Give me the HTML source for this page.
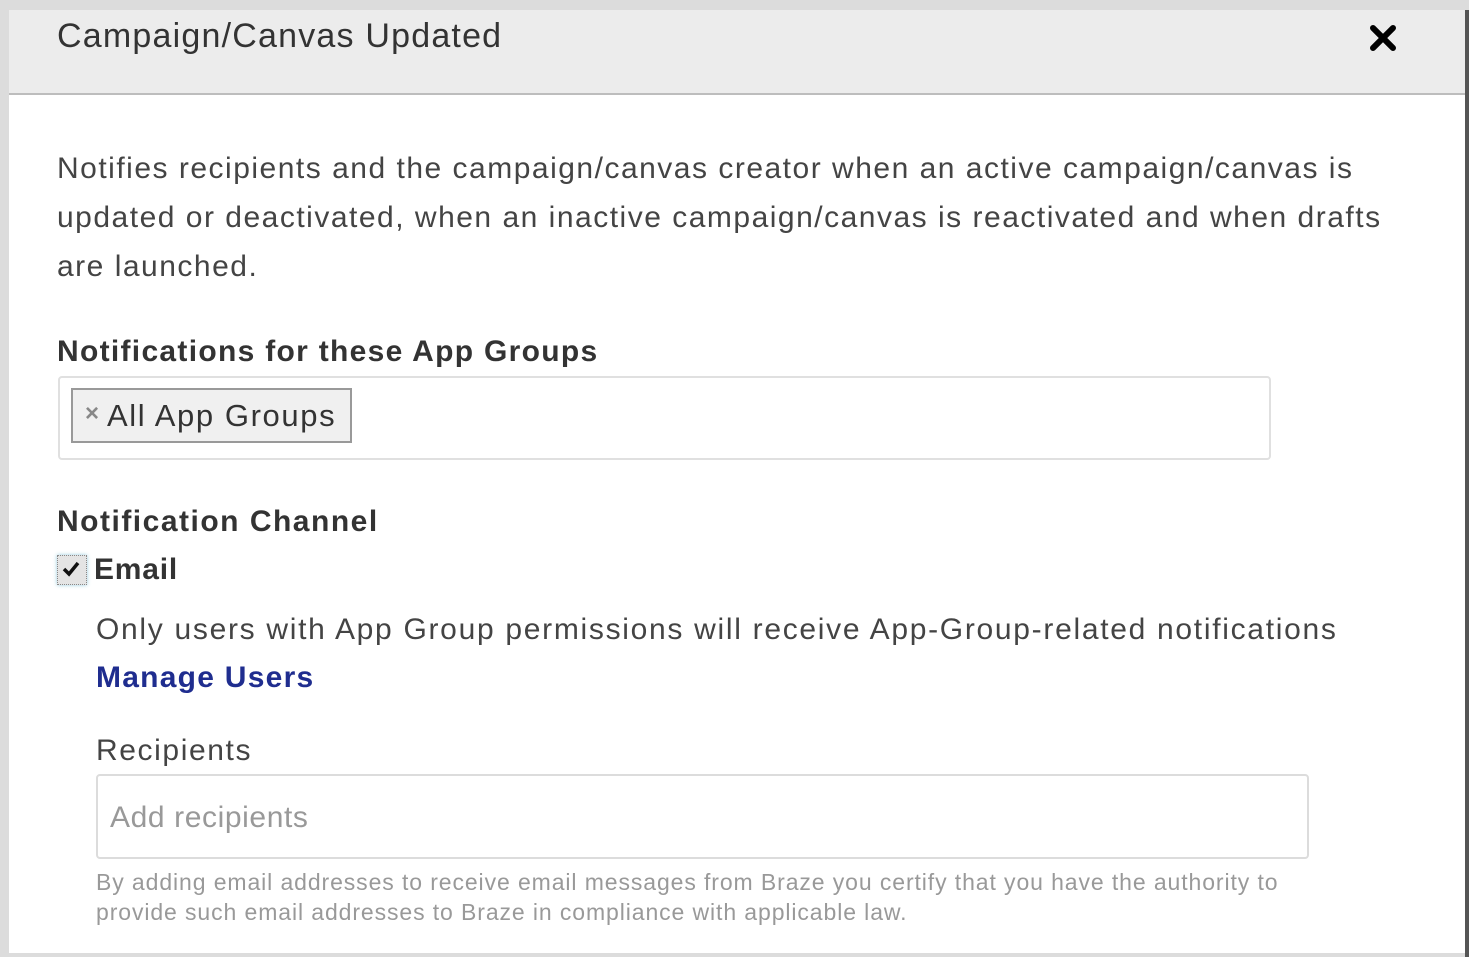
<!DOCTYPE html>
<html><head><meta charset="utf-8"><style>
body{margin:0;width:1469px;height:957px;background:#dcdcdc;font-family:"Liberation Sans",sans-serif;position:relative;overflow:hidden;color:#333}
.modal{position:absolute;left:9px;top:10px;width:1456px;height:943px;background:#fff}
.rb{position:absolute;left:1465px;top:10px;width:4px;height:947px;background:#555}
.hdr{position:absolute;left:0;top:0;width:1456px;height:83px;background:#ececec;border-bottom:2px solid #bdbdbd}
.t{position:absolute;white-space:nowrap}
</style></head><body>
<div class="modal">
<div class="hdr"></div>
</div>
<div class="rb"></div>
<div class="t" style="left:57px;top:17px;font-size:34px;color:#333;letter-spacing:1.2px">Campaign/Canvas Updated</div>
<svg style="position:absolute;left:1369px;top:24px" width="28" height="28" viewBox="0 0 28 28"><path d="M4 4L24 24M24 4L4 24" stroke="#000" stroke-width="6" stroke-linecap="round"/></svg>
<div class="t" style="left:57px;top:144px;font-size:30px;line-height:49px;color:#444;letter-spacing:1.5px">Notifies recipients and the campaign/canvas creator when an active campaign/canvas is<br>updated or deactivated, when an inactive campaign/canvas is reactivated and when drafts<br>are launched.</div>
<div class="t" style="left:57px;top:335px;font-size:30px;font-weight:bold;color:#333;letter-spacing:1.3px">Notifications for these App Groups</div>
<div style="position:absolute;left:58px;top:376px;width:1209px;height:80px;border:2px solid #e0e0e0;border-radius:4px;background:#fff"></div>
<div style="position:absolute;left:71px;top:388px;width:277px;height:51px;border:2px solid #999;background:#f0f0f0"></div>
<div class="t" style="left:85px;top:400px;font-size:24px;color:#888;font-weight:bold">×</div>
<div class="t" style="left:107px;top:398px;font-size:31px;color:#333;letter-spacing:1.6px">All App Groups</div>
<div class="t" style="left:57px;top:505px;font-size:30px;font-weight:bold;color:#333;letter-spacing:1.5px">Notification Channel</div>
<div style="position:absolute;left:57px;top:555px;width:28px;height:28px;border:1px dotted #888;background:#e4e4e4;box-shadow:0 0 4px #9cd"></div>
<svg style="position:absolute;left:60px;top:558px" width="22" height="22" viewBox="0 0 22 22"><path d="M4 11L9 16L18 5" stroke="#111" stroke-width="3.5" fill="none"/></svg>
<div class="t" style="left:94px;top:553px;font-size:30px;font-weight:bold;color:#333;letter-spacing:0.8px">Email</div>
<div class="t" style="left:96px;top:613px;font-size:30px;color:#444;letter-spacing:1.7px">Only users with App Group permissions will receive App-Group-related notifications</div>
<div class="t" style="left:96px;top:661px;font-size:30px;font-weight:bold;color:#1f2d8f;letter-spacing:1.25px">Manage Users</div>
<div class="t" style="left:96px;top:734px;font-size:30px;color:#444;letter-spacing:1.6px">Recipients</div>
<div style="position:absolute;left:96px;top:774px;width:1209px;height:81px;border:2px solid #dcdcdc;border-radius:4px;background:#fff"></div>
<div class="t" style="left:110px;top:801px;font-size:30px;color:#999;letter-spacing:0.6px">Add recipients</div>
<div class="t" style="left:96px;top:867px;font-size:23px;line-height:30px;color:#999;letter-spacing:0.9px">By adding email addresses to receive email messages from Braze you certify that you have the authority to<br>provide such email addresses to Braze in compliance with applicable law.</div>
</body></html>
